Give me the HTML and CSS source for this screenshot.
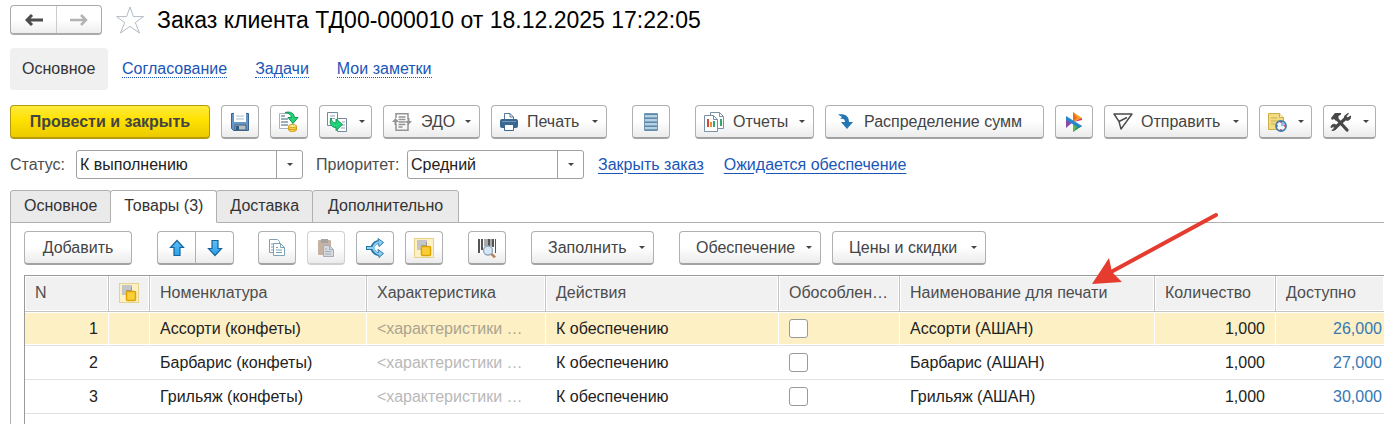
FILE: index.html
```html
<!DOCTYPE html>
<html lang="ru">
<head>
<meta charset="utf-8">
<title>Заказ клиента</title>
<link rel="stylesheet" href="styles.css">
</head>
<body>
<svg class="defs" width="0" height="0" aria-hidden="true">
  <defs>
    <linearGradient id="sky" x1="0" y1="0" x2="0" y2="1"><stop offset="0" stop-color="#5cc0f5"/><stop offset="1" stop-color="#2ba0ea"/></linearGradient>
    <symbol id="squares" viewBox="0 0 20 20">
      <rect x=".5" y=".5" width="19" height="19" fill="#fdf0c4" stroke="#e5d28d"/>
      <path d="M3 2h10v6H7v4H3z" fill="#c4c5c8"/><path d="M12.500 4v4M7 7.500h5" stroke="#98999e"/>
      <rect x="7.500" y="8.500" width="9" height="9" rx="1" fill="#f8cf38" stroke="#dda400" stroke-width="1.500"/>
    </symbol>
  </defs>
</svg>
<header class="title-row">
  <div class="history">
    <button class="history-btn" aria-label="Назад"><svg width="18" height="12" viewBox="0 0 18 12"><path d="M7 1 2 6l5 5M2 6h16" fill="none" stroke="#4d4d4d" stroke-width="3"/></svg></button>
    <button class="history-btn" aria-label="Вперед"><svg width="18" height="12" viewBox="0 0 18 12"><path d="M11 1l5 5-5 5M16 6H0" fill="none" stroke="#b3b3b3" stroke-width="2.500"/></svg></button>
  </div>
  <button class="star" aria-label="Добавить в избранное"><svg width="30" height="30" viewBox="0 0 30 30"><path d="M15 2l3.400 9.600H28.500L20.300 17.600 24.500 28 15 21.400 5.500 28l4.200-10.400L1.500 11.600H11.600z" fill="#fff" stroke="#b4bbc3"/></svg></button>
  <h1 class="title">Заказ клиента ТД00-000010 от 18.12.2025 17:22:05</h1>
</header>

<nav class="sections">
  <span class="section-current">Основное</span>
  <a class="section-link" href="#approval">Согласование</a>
  <a class="section-link" href="#tasks">Задачи</a>
  <a class="section-link" href="#notes">Мои заметки</a>
</nav>

<div class="toolbar">
  <button class="btn primary">Провести и закрыть</button>
  <button class="btn icon" aria-label="Записать"><svg width="20" height="20" viewBox="0 0 20 20"><path d="M1.500 1.500h17v17h-15l-2-2z" fill="#6795c4" stroke="#3b6390"/><path d="M4 1h12v9H4z" fill="#fff"/><path d="M6 4h8M6 7h8" stroke="#a9bfd3"/><path d="M5 13h11v5H5z" fill="#b8bdc1" stroke="#416281"/><path d="M6 14h3v4H6z" fill="#335b82"/></svg></button>
  <button class="btn icon" aria-label="Провести"><svg width="22" height="22" viewBox="0 0 22 22"><path d="M1.500 2.500h13v15h-13z" fill="#fff" stroke="#a6b4c2"/><path d="M3 5h4M3 8h7M3 11h7M3 14h7" stroke="#7f93a6" stroke-width="1.500"/><path d="M7 1.500c6-1.500 9 1 9.500 5H20l-5 6-5-6h3.500C13 3.500 11 2 7 1.500z" fill="#21d47b" stroke="#109a53"/><path d="M10.500 15v4c1 2 7 2 8 0v-4" fill="#f6d457" stroke="#d19d1a"/><ellipse cx="14.500" cy="15" rx="4" ry="1.500" fill="#fff0a0" stroke="#d19d1a"/><path d="M10.500 17.500c1 1.500 7 1.500 8 0" fill="none" stroke="#d19d1a"/></svg></button>
  <button class="btn icon drop" aria-label="Создать на основании"><svg width="21" height="20" viewBox="0 0 21 20"><path d="M.5.500h10v13H.5z" fill="#fff" stroke="#74899e"/><path d="M3 4h5M3 6.500h5" stroke="#91a2b3"/><path d="M10.500 6.500h9v13h-9z" fill="#fff" stroke="#74899e"/><path d="M15 10h3M15 13h3M14 16h4" stroke="#91a2b3"/><path d="M4 6c-2 5 0 9.500 5 9.500v3l6.500-6L9 7v4C6 11 4.500 9 4 6z" fill="#21d47b" stroke="#109a53"/></svg><i class="caret"></i></button>
  <button class="btn drop edo"><svg width="20" height="18" viewBox="0 0 20 18"><path d="M4 5V.8h12V6M4 11v6.200h12V11" fill="none" stroke="#949494" stroke-width="1.500"/><path d="M6.500 4h7M6.500 6.500h7M6.500 9h7M6.500 11.500h7M6.500 14h4" stroke="#949494" stroke-width="1.300"/><path d="M3.500 8v4M16.500 5v4" stroke="#949494" stroke-width="2"/><path d="M0 9l3.500-4L7 9zM13 8h7l-3.500 4z" fill="#949494"/></svg>ЭДО<i class="caret"></i></button>
  <button class="btn drop print"><svg width="18" height="18" viewBox="0 0 18 18"><path d="M4.500 8V.5H10l3.500 3.500v4" fill="#fff" stroke="#55799d"/><path d="M10 .5V4h3.500" fill="none" stroke="#55799d"/><rect y="6" width="18" height="9" rx="2" fill="#386791"/><path d="M2 8.500h14" stroke="#7697b5"/><path d="M4.500 11.500h9v6h-9z" fill="#fff" stroke="#386791"/></svg>Печать<i class="caret"></i></button>
  <button class="btn icon group" aria-label="Структура"><svg width="14" height="18" viewBox="0 0 14 18"><path d="M1 0h12v18H1z" fill="#83a9c5"/><path d="M.5.500h13v17H.5z" fill="none" stroke="#7096b3"/><path d="M1 1.500h12M1 5.500h12M1 9.500h12M1 13.500h12M1 17h12" stroke="#5d88a8"/><path d="M1 3h12M1 7h12M1 11h12M1 15h12" stroke="#b4d2e4" stroke-width="2"/></svg></button>
  <button class="btn drop group reports"><svg width="20" height="20" viewBox="0 0 20 20"><path d="M6.500.5h9l4 4v12h-13z" fill="#fff" stroke="#7990a5"/><path d="M15.500.5v4h4" fill="none" stroke="#7990a5"/><path d="M17 7v7" stroke="#35a76b" stroke-width="2"/><path d="M.5 3.500h9l4 4v12H.5z" fill="#fff" stroke="#7990a5"/><path d="M9.500 3.500v4h4" fill="none" stroke="#7990a5"/><path d="M4 7v8" stroke="#db4437" stroke-width="2"/><path d="M7 10v5" stroke="#e39234" stroke-width="2"/><path d="M10 9v6" stroke="#35a76b" stroke-width="2"/></svg>Отчеты<i class="caret"></i></button>
  <button class="btn distribute"><svg width="16" height="15" viewBox="0 0 16 15"><path d="M1 .5C8-.5 12 2 12 8h4l-6 7-6-7h4C8 5 6 4 3 5l2-2z" fill="#2376b3"/></svg>Распределение сумм</button>
  <button class="btn icon" aria-label="1С:Бизнес-сеть"><svg width="18" height="20" viewBox="0 0 18 20"><path d="M8 0l9 6-9 4z" fill="#f8a01c"/><path d="M8 0l4 6-4 4z" fill="#ee6a2a"/><path d="M8 10l9-4v2z" fill="#e8225d"/><path d="M1 5v11l7-6z" fill="#8a4aa5"/><path d="M8 10l9 4-9 6z" fill="#1f9a4a"/><path d="M8 20v-8l4 3z" fill="#63b947"/><path d="M1 4l16 10-3 2L1 8z" fill="#2587cb"/></svg></button>
  <button class="btn drop send"><svg width="20" height="17" viewBox="0 0 20 17"><path d="M1 1h18L8 16 6 8.500zM6 8.500L14 4.500" fill="none" stroke="#4a4a4a" stroke-width="1.400" stroke-linejoin="round"/></svg>Отправить<i class="caret"></i></button>
  <button class="btn icon drop" aria-label="Напоминание"><svg width="20" height="20" viewBox="0 0 20 20"><path d="M1.500 1.500h11l4 4v12h-15z" fill="#f2dc83" stroke="#cdae45"/><path d="M12.500 1.500v4h4" fill="#fff2bb" stroke="#cdae45"/><path d="M4 6h6M4 9h9M4 12h4" stroke="#cbae4e"/><circle cx="14" cy="14" r="5" fill="#eff7ff" stroke="#447aaa" stroke-width="1.800"/><path d="M14 10v4h4a4 4 0 00-4-4" fill="#93baf0"/><path d="M14 10v1M14 17v1M10 14h1M17 14h1" stroke="#e24a41" stroke-width="1.500"/></svg><i class="caret"></i></button>
  <button class="btn icon drop" aria-label="Сервис"><svg width="22" height="20" viewBox="0 0 22 20"><path d="M6 6l11 12M16 6L6 15" stroke="#484848" stroke-width="3.200" stroke-linecap="round"/><path d="M1 6l4-5h6v1.500L8.500 4v2.500L6 9 4 7 2 8z" fill="#484848"/><path d="M18.500 1.500L16 4.500l1.500 1.500L20.500 4c.5 3.500-2 5-4.500 4s-2.500-5 2.500-6.500zM2 18.500l2.500-2.500-1-1.500L1 15.500c0-3 3-4 5-2.500s1 5.500-4 5.500z" fill="#484848" stroke="#484848"/></svg><i class="caret"></i></button>
</div>

<div class="fields">
  <label class="status-label" for="status">Статус:</label>
  <div class="combo status"><select id="status"><option>К выполнению</option></select><span class="combo-arrow"><i class="caret"></i></span></div>
  <label class="priority-label" for="priority">Приоритет:</label>
  <div class="combo priority"><select id="priority"><option>Средний</option></select><span class="combo-arrow"><i class="caret"></i></span></div>
  <div class="field-links">
    <a class="field-link" href="#close">Закрыть заказ</a>
    <a class="field-link" href="#supply">Ожидается обеспечение</a>
  </div>
</div>

<div class="tabs" role="tablist">
  <button class="tab" role="tab">Основное</button>
  <button class="tab active" role="tab" aria-selected="true">Товары (3)</button>
  <button class="tab" role="tab">Доставка</button>
  <button class="tab" role="tab">Дополнительно</button>
</div>

<main class="panel">
  <div class="toolbar commands">
    <button class="btn add">Добавить</button>
    <div class="pair group">
      <button class="btn icon" aria-label="Вверх"><svg width="16" height="18" viewBox="0 0 16 18"><path d="M8 1.500l6.500 7H11v8H5v-8H1.500z" fill="url(#sky)" stroke="#17649c" stroke-width="1.200"/></svg></button>
      <button class="btn icon" aria-label="Вниз"><svg width="16" height="18" viewBox="0 0 16 18"><path d="M8 16.500l6.500-7H11v-8H5v8H1.500z" fill="url(#sky)" stroke="#17649c" stroke-width="1.200"/></svg></button>
    </div>
    <button class="btn icon group" aria-label="Копировать"><svg width="18" height="18" viewBox="0 0 18 18"><path d="M1.500.5h8l2 2v11h-10z" fill="#fff" stroke="#7ba2b6"/><path d="M3 5h3M3 8h3M3 11h3" stroke="#7ba2b6"/><path d="M5.500 4.500h7l4 4v8h-11z" fill="#fff" stroke="#7ba2b6"/><path d="M12.500 4.500v4h4M8 8.500h2M8 11h6M8 13.500h6" fill="none" stroke="#7ba2b6"/></svg></button>
    <button class="btn icon" disabled aria-label="Вставить"><svg width="18" height="20" viewBox="0 0 18 20"><rect x="1" y="2" width="13" height="15" rx="1" fill="#c6b1a2"/><path d="M4 1h7v4H4z" fill="#a5a4a5"/><path d="M6.500 7.500h6l4 4v7h-10z" fill="#d5dae0" stroke="#a7adb6"/><path d="M12.500 7.500v4h4M8 11h2M8 13.500h6M8 16h6" fill="none" stroke="#a7adb6"/></svg></button>
    <button class="btn icon" aria-label="Разбить строку"><svg width="20" height="20" viewBox="0 0 20 20"><path d="M1 10h6c2-5 4-6.500 8-6M7 10c2 5 4 6.500 8 6" fill="none" stroke="#2878a9" stroke-width="4"/><path d="M13 .5l5.500 4-4.500 4zM13 11.500l5.500 4-4.500 4z" fill="#8ed0f3" stroke="#2878a9"/><path d="M2 10h6c2-5 4-6.500 8-5.500M8 10c2 5 4 6.500 8 5.500" fill="none" stroke="#8ed0f3" stroke-width="2"/></svg></button>
    <button class="btn icon" aria-label="Обособленно"><svg width="20" height="20"><use href="#squares"/></svg></button>
    <button class="btn icon group" aria-label="Поиск по штрихкоду"><svg width="20" height="20" viewBox="0 0 20 20"><path d="M2 1v14M5 1v11M12 1v7M16 1v8" stroke="#555" stroke-width="2"/><path d="M8 1v7M10 1v7M14 1v7M18.500 1v14" stroke="#555"/><circle cx="11" cy="12.500" r="4.500" fill="#d6e8f7" stroke="#93a5b5" stroke-width="1.300"/><path d="M14.500 16l3.500 3.500" stroke="#b9825a" stroke-width="2.500"/></svg></button>
    <button class="btn drop wide group fill">Заполнить<i class="caret"></i></button>
    <button class="btn drop wide group supply">Обеспечение<i class="caret"></i></button>
    <button class="btn drop wide prices">Цены и скидки<i class="caret"></i></button>
  </div>

  <div class="grid">
  <table class="goods">
    <colgroup><col class="c-n"><col class="c-flag"><col class="c-item"><col class="c-char"><col class="c-act"><col class="c-sep"><col class="c-print"><col class="c-qty"><col></colgroup>
    <thead>
      <tr><th>N</th><th class="flag"><svg width="20" height="20" role="img" aria-label="Обособленно"><use href="#squares"/></svg></th><th>Номенклатура</th><th>Характеристика</th><th>Действия</th><th>Обособлен…</th><th class="pointed">Наименование для печати
        <svg class="pointer" width="128" height="74" viewBox="0 0 128 74" aria-hidden="true"><path d="M20 60L125 3" stroke="#e63c30" stroke-width="4" stroke-linecap="round"/><path d="M1 72L18 46l3 14 10 10z" fill="#e63c30"/></svg></th><th>Количество</th><th>Доступно</th></tr>
    </thead>
    <tbody>
      <tr class="selected"><td class="num">1</td><td></td><td>Ассорти (конфеты)</td><td class="muted">&lt;характеристики …</td><td>К обеспечению</td><td><input type="checkbox" aria-label="Обособленно, строка 1"></td><td>Ассорти (АШАН)</td><td class="num">1,000</td><td class="num stock">26,000</td></tr>
      <tr><td class="num">2</td><td></td><td>Барбарис (конфеты)</td><td class="muted">&lt;характеристики …</td><td>К обеспечению</td><td><input type="checkbox" aria-label="Обособленно, строка 2"></td><td>Барбарис (АШАН)</td><td class="num">1,000</td><td class="num stock">27,000</td></tr>
      <tr><td class="num">3</td><td></td><td>Грильяж (конфеты)</td><td class="muted">&lt;характеристики …</td><td>К обеспечению</td><td><input type="checkbox" aria-label="Обособленно, строка 3"></td><td>Грильяж (АШАН)</td><td class="num">1,000</td><td class="num stock">30,000</td></tr>
    </tbody>
  </table>
  </div>
</main>
</body>
</html>
```

FILE: styles.css
```css
* { box-sizing: border-box; }
html { height: 100%; }
body {
  min-height: 100%;
  margin: 0;
  padding: 5px 0 0 10px;
  display: flex;
  flex-direction: column;
  overflow: hidden;
  background: #fff;
  color: #333;
  font: 16px/20px "Liberation Sans", Arial, sans-serif;
}
button, select { font: inherit; color: inherit; }
svg { display: block; flex: none; }
.defs { position: absolute; }

.title-row { display: flex; align-items: center; height: 30px; }
.history {
  display: flex;
  height: 30px;
  border: 1px solid #aaa;
  border-bottom-width: 2px;
  border-radius: 4px;
  background: linear-gradient(#fff 50%, #eee);
}
.history-btn {
  display: flex;
  align-items: center;
  justify-content: center;
  width: 45px;
  padding: 0;
  border: 0;
  background: none;
}
.history-btn + .history-btn { border-left: 1px solid #ccc; }
.star { margin: 0 12px 0 13px; padding: 0; border: 0; background: none; }
.title { margin: 0; color: #000; font-size: 23px; line-height: 30px; font-weight: 400; white-space: nowrap; }

.sections { display: flex; align-items: center; gap: 28px; margin-top: 13px; white-space: nowrap; }
.section-current { min-width: 98px; margin-right: -14px; padding: 11px 12px; border-radius: 4px; background: #f0f0f0; }
.section-link { color: #1a56b8; line-height: 17px; text-decoration: none; border-bottom: 1px dotted #1a56b8; }

.toolbar { display: flex; gap: 11px; margin-top: 15px; white-space: nowrap; }
.btn {
  display: flex;
  align-items: center;
  flex: none;
  gap: 8px;
  height: 34px;
  padding: 0 8px;
  border: 1px solid #b0b0b0;
  border-bottom: 2px solid #a3a3a3;
  border-radius: 4px;
  background: linear-gradient(#fff 50%, #ebebeb);
  color: #444;
}
.btn.primary {
  justify-content: center;
  min-width: 200px;
  border-color: #b39b0c;
  background: linear-gradient(#ffea3c, #ffe100 45%, #ecca00);
  font-weight: 700;
}
.btn.icon { justify-content: center; width: 38px; padding: 0; }
.btn.icon.drop { width: 53px; gap: 11px; }
.btn.wide { padding-left: 16px; }
.btn.add { justify-content: center; min-width: 108px; }
.btn.distribute { min-width: 219px; padding-left: 11px; gap: 11px; }
.edo { min-width: 97px; }
.print { min-width: 116px; }
.reports { min-width: 119px; }
.send { min-width: 144px; }
.fill { min-width: 123px; }
.supply { min-width: 142px; }
.prices { min-width: 154px; }
.print, .reports, .edo { gap: 9px; }
.btn:disabled { border-color: #d0d0d0; }
.group { margin-left: 14px; }
.caret { width: 0; height: 0; border: 3px solid transparent; border-top-color: #444; border-bottom: 0; }
.btn .caret { margin-left: auto; }
.btn.icon .caret { margin-left: 0; }

.fields { display: flex; align-items: center; margin-top: 11px; color: #4d4d4d; white-space: nowrap; }
.status-label { min-width: 59px; }
.priority-label { min-width: 84px; margin-left: 13px; }
.combo {
  position: relative;
  height: 29px;
  margin-left: 7px;
  border: 1px solid #a0a0a0;
  border-radius: 3px;
}
.combo.status { width: 227px; }
.combo.priority { width: 177px; }
.combo select {
  width: 100%;
  height: 100%;
  padding: 0 30px 0 3px;
  border: 0;
  background: none;
  appearance: none;
  color: #222;
}
.combo-arrow {
  position: absolute;
  inset: 0 0 0 auto;
  display: flex;
  align-items: center;
  justify-content: center;
  width: 26px;
  border-left: 1px solid #a0a0a0;
  pointer-events: none;
}
.field-links { display: flex; gap: 20px; margin-left: 14px; }
.field-link { color: #1a56b8; text-underline-offset: 3px; }

.tabs { display: flex; margin: 11px 0 -1px; white-space: nowrap; }
.tab {
  position: relative;
  height: 33px;
  margin-right: -1px;
  padding: 0 13px 2px;
  border: 1px solid #b0b0b0;
  border-radius: 3px 3px 0 0;
  background: #eaeaea;
}
.tab:last-child { min-width: 147px; }
.tab.active { z-index: 1; border-bottom-color: #fff; background: #fff; }

.panel {
  display: flex;
  flex: 1;
  flex-direction: column;
  padding-left: 13px;
  border: solid #b0b0b0;
  border-width: 1px 0 0 1px;
}
.commands { margin: 8px 0 10px; }
.pair { display: flex; }
.pair .btn:first-child { width: 39px; border-radius: 4px 0 0 4px; }
.pair .btn:last-child { width: 39px; margin-left: -1px; border-radius: 0 4px 4px 0; }
.pair + .group { margin-left: 13px; }

.grid { flex: 1; border: solid #999; border-width: 1px 0 0 1px; }
.goods {
  width: 100%;
  border-collapse: separate;
  border-spacing: 0;
  table-layout: fixed;
}
.c-n { width: 84px; }
.c-flag { width: 41px; }
.c-item { width: 217px; }
.c-char { width: 179px; }
.c-act { width: 233px; }
.c-sep { width: 121px; }
.c-print { width: 255px; }
.c-qty { width: 121px; }
.goods th, .goods td { padding: 0 10px; text-align: left; white-space: nowrap; }
.goods th {
  height: 36px;
  padding-bottom: 2px;
  border-right: 1px solid #c4c4c4;
  border-bottom: 1px solid #c4c4c4;
  background: #f1f1f1;
  box-shadow: inset 0 0 0 1px #fff;
  color: #4d4d4d;
  font-weight: 400;
}
.goods td { height: 34px; border-bottom: 1px solid #e2e2e2; color: #222; }
.goods th:last-child { border-right: 0; }
.goods .selected td { background: #fdf0c5; border-right: 1px solid #fff; box-shadow: inset 0 -1px #fff, inset 0 1px #fff; }
.goods .num { padding-right: 11px; text-align: right; }
.goods td.muted { color: #b9b9b9; }
.goods .selected td.muted { color: #aaa58f; }
.goods .selected .num { padding-right: 10px; }
.goods td.stock, .goods .selected td.stock { padding-right: 2px; border-right: 0; color: #3778b5; }
.goods input {
  display: block;
  width: 19px;
  height: 19px;
  margin: 0;
  border: 1px solid #999;
  border-radius: 3px;
  background: #fff;
  appearance: none;
}
.goods th.pointed { position: relative; }
.pointer { position: absolute; left: 191px; bottom: 25px; }
```
